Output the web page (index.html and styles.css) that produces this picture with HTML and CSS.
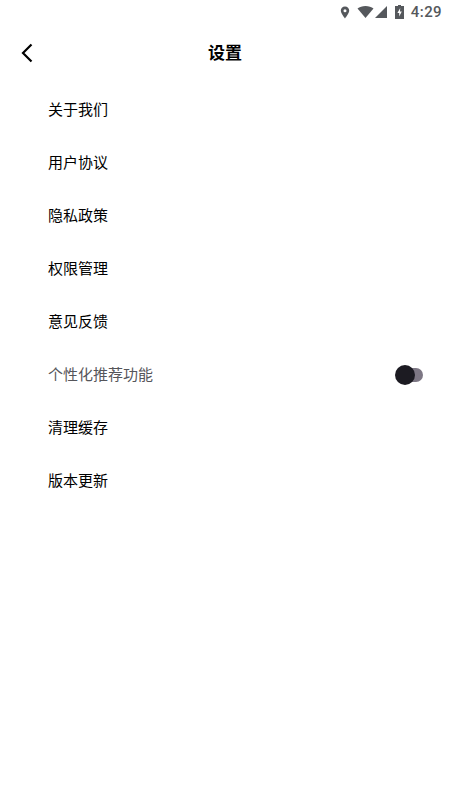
FILE: index.html
```html
<!DOCTYPE html>
<html lang="zh-CN">
<head>
<meta charset="utf-8">
<title>设置</title>
<link rel="stylesheet" href="styles.css">
</head>
<body>
<div class="status">
  <svg class="s-pin" viewBox="0 0 10 13"><path fill-rule="evenodd" d="M5 0.5C2.5 0.5 0.8 2.3 0.8 4.6 0.8 7.6 5 12.5 5 12.5S9.2 7.6 9.2 4.6C9.2 2.3 7.5 0.5 5 0.5ZM5 3.2A1.5 1.5 0 1 1 5 6.2 1.5 1.5 0 1 1 5 3.2Z"/></svg>
  <svg class="s-wifi" viewBox="0 0 16 12"><path d="M0 2.6C2 1 4.8 0 8 0s6 1 8 2.6L8 12Z"/></svg>
  <svg class="s-signal" viewBox="0 0 12 12"><path d="M12 0V12H0Z"/></svg>
  <svg class="s-batt" viewBox="0 0 9 14"><path fill-rule="evenodd" d="M3 0H6V1H9V14H0V1H3ZM5.2 3 2.4 8H4.2V11.5L6.8 6.5H5Z"/></svg>
  <span class="s-time">4:29</span>
</div>
<header class="nav">
  <svg class="back" viewBox="0 0 12 20"><path d="M10.5 1.5 2 10l8.5 8.5"/></svg>
  <h1 class="title">设置</h1>
</header>
<main class="list">
  <div class="row">关于我们</div>
  <div class="row">用户协议</div>
  <div class="row">隐私政策</div>
  <div class="row">权限管理</div>
  <div class="row">意见反馈</div>
  <div class="row row-muted">个性化推荐功能<span class="switch"><span class="knob"></span></span></div>
  <div class="row">清理缓存</div>
  <div class="row">版本更新</div>
</main>
</body>
</html>
```
FILE: styles.css
```css
html, body { margin: 0; padding: 0; background: #fff; }
body {
  width: 450px; height: 800px; overflow: hidden;
  font-family: "Noto Sans CJK SC", "Noto Sans", sans-serif;
  color: #000;
}
.status {
  height: 24px; display: flex; align-items: center; justify-content: flex-end;
  padding-right: 8px; box-sizing: border-box; color: #55585c;
}
.status svg { fill: #55585c; display: block; }
.s-pin { width: 10px; height: 13px; margin-right: 7px; }
.s-wifi { width: 17px; height: 12px; margin-right: 1px; }
.s-signal { width: 12px; height: 12px; margin-right: 8px; }
.s-batt { width: 9px; height: 14px; margin-right: 7px; }
.s-time { font: 500 15px/24px Roboto, sans-serif; letter-spacing: 0.4px; }
.nav {
  height: 58px; display: flex; align-items: center; justify-content: center;
  position: relative;
}
.back {
  position: absolute; left: 21px; top: 19px; width: 12px; height: 20px;
  fill: none; stroke: #000; stroke-width: 2.2;
}
.title { margin: -2px 0 0; font-size: 17px; font-weight: 700; line-height: 58px; }
.list { padding: 0 27px 0 48px; }
.row {
  height: 53px; display: flex; align-items: center; justify-content: space-between;
  font-size: 15px; line-height: 53px; color: #000;
}
.row-muted { color: #55555a; }
.switch {
  width: 26px; height: 14px; border-radius: 7px; background: #7d7784;
  position: relative; display: block; margin-top: 2px;
}
.knob {
  position: absolute; left: -2px; top: -3px; width: 20px; height: 20px;
  border-radius: 50%; background: #1c1b22;
}
```
